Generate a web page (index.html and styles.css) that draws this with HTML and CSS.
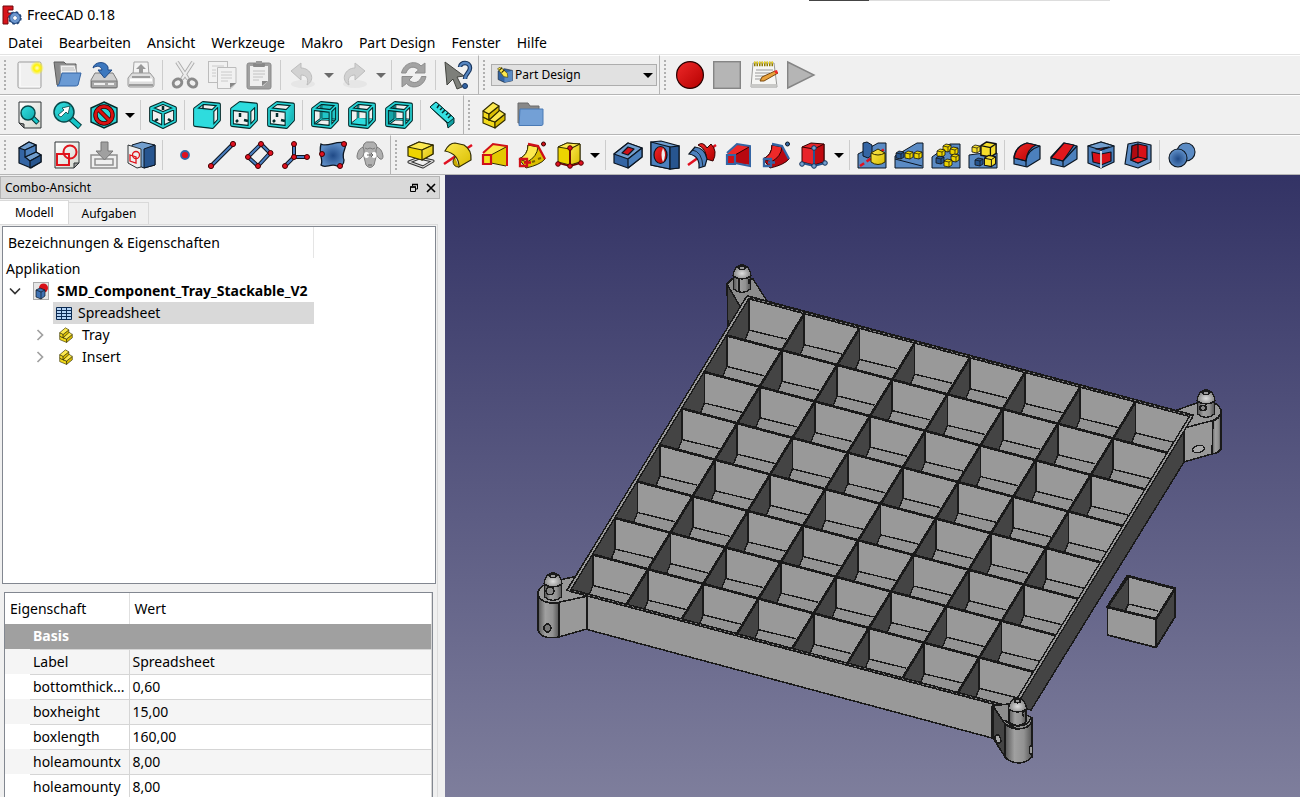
FILE: index.html
```html
<!DOCTYPE html>
<html lang="de">
<head>
<meta charset="utf-8">
<title>FreeCAD 0.18</title>
<meta name="viewport" content="width=device-width, initial-scale=1">
<link rel="stylesheet" href="styles.css">
</head>
<body>
<svg class="defs" width="0" height="0" aria-hidden="true">
  <defs>
    <linearGradient id="gBlue" x1="0" y1="0" x2="1" y2="1"><stop offset="0" stop-color="#729fcf"/><stop offset="1" stop-color="#27558f"/></linearGradient>
    <linearGradient id="gYellow" x1="0" y1="0" x2="1" y2="1"><stop offset="0" stop-color="#fce94f"/><stop offset="1" stop-color="#d9bd00"/></linearGradient>
    <linearGradient id="gRed" x1="0" y1="0" x2="1" y2="1"><stop offset="0" stop-color="#ef2929"/><stop offset="1" stop-color="#b40000"/></linearGradient>
    <linearGradient id="gTeal" x1="0" y1="0" x2="1" y2="1"><stop offset="0" stop-color="#34e0e2"/><stop offset="1" stop-color="#0fa9ab"/></linearGradient>
    <linearGradient id="gPaper" x1="0" y1="0" x2="1" y2="1"><stop offset="0" stop-color="#ffffff"/><stop offset="1" stop-color="#d3d7cf"/></linearGradient>
    <radialGradient id="gSun"><stop offset="0" stop-color="#fffbd0"/><stop offset=".45" stop-color="#fff200"/><stop offset="1" stop-color="#fff200" stop-opacity="0"/></radialGradient>
    <radialGradient id="gBall" cx=".5" cy=".55"><stop offset="0" stop-color="#204a87"/><stop offset="1" stop-color="#5b8bc4"/></radialGradient>
    <symbol id="wireFront" viewBox="0 0 28 28">
      <g fill="none" stroke="#032b2b" stroke-width="3.8" stroke-linejoin="round"><path d="M2 8L10 2 26 3.500V19L19.500 26 2 24ZM2 8L19.500 10 26 3.500M19.500 10V26"/></g>
      <g fill="none" stroke="#27d5d7" stroke-width="1.700" stroke-linejoin="round"><path d="M2 8L10 2 26 3.500V19L19.500 26 2 24ZM2 8L19.500 10 26 3.500M19.500 10V26"/></g>
    </symbol>
    <symbol id="wireBack" viewBox="0 0 28 28">
      <path d="M10 2V18L2 24M10 18L26 19" fill="none" stroke="#032b2b" stroke-width="2.600"/>
      <path d="M10 2V18L2 24M10 18L26 19" fill="none" stroke="#27d5d7" stroke-width="1"/>
    </symbol>
    <symbol id="part" viewBox="0 0 28 28">
      <g stroke="#302b00" stroke-width="1.100" stroke-linejoin="round"><path d="M3 16L9 19 15 21V27L3 22Z" fill="#f3da1c"/><path d="M15 21L25 13V19L15 27Z" fill="#d9bd00"/><path d="M9 19L19 9 25 13 15 21Z" fill="#fce94f"/><path d="M3 10L9 13V19L3 16Z" fill="#f3da1c"/><path d="M9 13L19 5V10L9 19Z" fill="#d9bd00"/><path d="M3 10L13 1.500 19 5 9 13Z" fill="#fce94f"/></g>
    </symbol>
    <symbol id="miniCube" viewBox="0 0 10 10">
      <path d="M1 3L4 1 9 2V7L6 9 1 8Z" stroke-width=".8" stroke-linejoin="round"/><path d="M1 3L6 4 9 2M6 4V9" fill="none" stroke-width=".7"/>
    </symbol>
    <linearGradient id="gSky" x1="0" y1="0" x2="0" y2="1"><stop offset="0" stop-color="#333365"/><stop offset="1" stop-color="#7e7e9c"/></linearGradient>
    <linearGradient id="gCyl"><stop offset="0" stop-color="#555"/><stop offset=".35" stop-color="#a0a0a0"/><stop offset=".7" stop-color="#929292"/><stop offset="1" stop-color="#555"/></linearGradient>
    <radialGradient id="gDome" cx=".5" cy=".6"><stop offset="0" stop-color="#dedede"/><stop offset="1" stop-color="#858585"/></radialGradient>
  </defs>
</svg>

<div class="window">
<header class="titlebar">
  <svg class="app-icon" viewBox="0 0 20 20" aria-hidden="true"><path d="M1 1H11V5H6V8H10V12H6V19H1Z" fill="#d8141c" stroke="#70080c"/><circle cx="13" cy="13" r="4" fill="none" stroke="#22477c" stroke-width="4"/><circle cx="13" cy="13" r="5.600" fill="none" stroke="#22477c" stroke-width="2.200" stroke-dasharray="2.400 2"/><circle cx="13" cy="13" r="3.600" fill="none" stroke="#6c97cf" stroke-width="2.600"/></svg>
  <h1>FreeCAD 0.18</h1>
  <span class="edge" aria-hidden="true"></span>
</header>
<nav class="menubar" aria-label="Menü">
  <button>Datei</button><button>Bearbeiten</button><button>Ansicht</button><button>Werkzeuge</button><button>Makro</button><button>Part Design</button><button>Fenster</button><button>Hilfe</button>
</nav>

<div class="toolrow">
  <div class="toolbar" role="toolbar" aria-label="Datei"><span class="grip"></span>
    <button class="tool" aria-label="Neu"><svg viewBox="0 0 28 28"><rect x="2" y="1" width="23" height="26" rx="1.500" fill="#f0f0f0" stroke="#9b9b9b"/><path d="M4 3V25M3.500 26H24" stroke="#fff" fill="none"/><circle cx="21" cy="7" r="7" fill="url(#gSun)"/></svg></button>
    <button class="tool" aria-label="Öffnen"><svg viewBox="0 0 28 28"><path d="M1 1H11L13 3H23V24H4Z" fill="#8a8a8a" stroke="#5d5d5d"/><path d="M7 4H22L25 16 8 24Z" fill="#f0f0f0" stroke="#999"/><path d="M9 7H21M9 9H22" stroke="#bbb"/><path d="M9 12H28L25 24Q24 25 22 25H4Q6 24 6.500 22Z" fill="#6a9ad4" stroke="#3465a4"/></svg></button>
    <button class="tool" aria-label="Speichern"><svg viewBox="0 0 28 28"><path d="M5 12H23L27 19V26Q27 27 26 27H2Q1 27 1 26V19Z" fill="#cfcfcf" stroke="#7d7d7d"/><path d="M1.500 20H27V26.500H1.500Z" fill="#a8a8a8" stroke="#7d7d7d"/><path d="M4 23H15M18 23H24" stroke="#eee" stroke-width="2"/><path d="M3 7C4 1 15-1 18 6V9H22L14.500 17 8 9H12C11 5 7 4 3 7Z" fill="#3c78bf" stroke="#204a87"/></svg></button>
    <button class="tool" aria-label="Drucken"><svg viewBox="0 0 28 28"><path d="M7 1H21L22 14H6Z" fill="#f4f4f4" stroke="#a5a5a5"/><path d="M14 3L19 8H16V13H12V8H9Z" fill="#999"/><path d="M5 12H23L27 17V24Q27 26 25 26H3Q1 26 1 24V17Z" fill="#dedede" stroke="#9a9a9a"/><path d="M5 16H23M2 24H26" stroke="#888" stroke-width="1.500"/><path d="M3 19H25" stroke="#fff" stroke-width="3"/></svg></button>
    <span class="sep"></span>
    <button class="tool" aria-label="Ausschneiden"><svg viewBox="0 0 28 28"><path d="M6 1L17 18M22 1L11 18" stroke="#ababab" stroke-width="4"/><path d="M6 1L17 18M22 1L11 18" stroke="#ececec" stroke-width="2.200"/><ellipse cx="6.500" cy="22" rx="4.500" ry="3.800" transform="rotate(-35 6.500 22)" fill="none" stroke="#8a8a8a" stroke-width="3"/><ellipse cx="21.500" cy="22" rx="4.500" ry="3.800" transform="rotate(35 21.500 22)" fill="none" stroke="#8a8a8a" stroke-width="3"/></svg></button>
    <button class="tool" aria-label="Kopieren"><svg viewBox="0 0 28 28"><g fill="#f1f1f1" stroke="#bcbcbc"><rect x=".5" y=".5" width="19" height="21"/><path d="M9.500 6.500H28V22L23 27.500H9.500Z"/></g><path d="M4 5H16M4 9H8M4 12H8M4 15H8M13 11H24M13 14H24M13 17H24M13 20H20" stroke="#cacaca"/><path d="M22 27V22H28Z" fill="#888"/></svg></button>
    <button class="tool" aria-label="Einfügen"><svg viewBox="0 0 28 28"><rect x="2" y="2" width="24" height="26" rx="2" fill="#a0a0a0" stroke="#8a8a8a"/><path d="M5 5H23V20L18 25H5Z" fill="#efefef"/><path d="M17 25V20H23Z" fill="#888"/><rect x="8" y="2" width="12" height="4" rx="1" fill="#888"/><rect x="11" y="0" width="6" height="3" fill="#999"/><path d="M8 10H20M8 13H20M8 16H18M8 19H14" stroke="#c2c2c2"/></svg></button>
    <span class="sep"></span>
    <button class="tool" aria-label="Rückgängig"><svg viewBox="0 0 28 28"><ellipse cx="14" cy="23" rx="12" ry="4" fill="#e6e6e6"/><path d="M2 10L12 2V7C22 7 27 19 18 24 20 17 17 14 12 14V19Z" fill="#d2d2d2" stroke="#bdbdbd"/></svg></button>
    <button class="drop" aria-label="Rückgängig-Liste"><i class="arrow grey"></i></button>
    <button class="tool" aria-label="Wiederherstellen"><svg viewBox="0 0 28 28"><ellipse cx="14" cy="23" rx="12" ry="4" fill="#e6e6e6"/><path d="M24 10L14 2V7C4 7-1 19 8 24 6 17 9 14 14 14V19Z" fill="#d2d2d2" stroke="#bdbdbd"/></svg></button>
    <button class="drop" aria-label="Wiederherstellen-Liste"><i class="arrow grey"></i></button>
    <span class="sep"></span>
    <button class="tool" aria-label="Aktualisieren"><svg viewBox="0 0 28 28" fill="#a3a3a3" stroke="#8c8c8c"><path d="M1.500 12C4 1 16-1 21 5L25 2V12H15L18.500 9C14 4 8 6 6 12Z"/><path d="M26 15.500C24 26 12 29 6.500 22.500L2 26V15.500H12.500L9 19C14 24 20 21 21.500 15.500Z"/></svg></button>
    <span class="sep"></span>
    <button class="tool" aria-label="Direkthilfe"><svg viewBox="0 0 28 28"><path d="M1 1L20 15 13 16 18 26 13 28 9 18 3 24Z" fill="#7d7f7a" stroke="#42443f"/><path d="M16 6C16 1 26 0 26 7 26 12 21 12 21 18" fill="none" stroke="#16335b" stroke-width="4.500"/><path d="M16 6C16 1 26 0 26 7 26 12 21 12 21 18" fill="none" stroke="#5585c0" stroke-width="2.300"/><circle cx="21" cy="25" r="2.500" fill="#3465a4" stroke="#16335b"/></svg></button>
  </div>
  <div class="toolbar" role="toolbar" aria-label="Arbeitsbereich"><span class="grip"></span>
    <div class="workbench"><svg viewBox="0 0 28 28" aria-hidden="true"><path d="M2 7L13 3 27 6V24L13 27 2 22Z" fill="#3465a4" stroke="#0b1521"/><path d="M13 11L27 6V24L13 27Z" fill="#5b8bc4"/><path d="M1 3L6 0 18 11 19 18 12 17Z" fill="#fce94f" stroke="#302b00"/><path d="M4 6L9 1M8 10L13 5" stroke="#302b00" stroke-width="2"/></svg><select aria-label="Arbeitsbereich"><option>Part Design</option></select><i class="arrow"></i></div>
  </div>
  <div class="toolbar last" role="toolbar" aria-label="Makro"><span class="grip"></span>
    <button class="tool" aria-label="Makro aufzeichnen"><svg viewBox="0 0 28 28"><circle cx="14" cy="14" r="13.400" fill="url(#gRed)" stroke="#280000" stroke-width="1.200"/></svg></button>
    <button class="tool" aria-label="Makro stoppen"><svg viewBox="0 0 28 28"><rect x=".7" y=".7" width="26.600" height="26.600" fill="#b5b5b5" stroke="#858585" stroke-width="1.400"/></svg></button>
    <button class="tool" aria-label="Makros"><svg viewBox="0 0 28 28"><path d="M3 2H24L27 26H1Z" fill="#f6f6f4" stroke="#9a9a98"/><path d="M1.500 23H26.500V26.500H1Z" fill="#c9c9c7"/><path d="M4 3H24" stroke="#8f7a00" stroke-width="4.500" stroke-dasharray="1.500 1"/><path d="M4 1.500H24" stroke="#f0d820" stroke-width="2" stroke-dasharray="1.500 1"/><path d="M6 9H23M5 12H20M5 15H16M5 18H12" stroke="#999"/><path d="M10 20L12 16 25 10 28 12 14 20Z" fill="#e9a13b" stroke="#7a4a10"/><path d="M24 10L27 9 28 12 26 13Z" fill="#ef2929"/></svg></button>
    <button class="tool" aria-label="Makro ausführen"><svg viewBox="0 0 28 28"><path d="M.7 1L27 14 .7 27Z" fill="#b5b5b5" stroke="#858585" stroke-width="1.400"/></svg></button>
  </div>
</div>

<div class="toolrow">
  <div class="toolbar" role="toolbar" aria-label="Ansicht"><span class="grip"></span>
    <button class="tool" aria-label="Alles einpassen"><svg viewBox="0 0 28 28"><path d="M3 1H25V27H8L3 22Z" fill="url(#gPaper)" stroke="#2e3436"/><path d="M3 22L8 23V27Z" fill="#888" stroke="#2e3436"/><path d="M16 16L22 22" stroke="#033" stroke-width="5"/><path d="M16 16L21.500 21.500" stroke="#16c5c8" stroke-width="3"/><circle cx="12" cy="12" r="7" fill="url(#gTeal)" stroke="#06494a" stroke-width="1.500"/></svg></button>
    <button class="tool" aria-label="Auswahl einpassen"><svg viewBox="0 0 28 28"><path d="M17 17L27 26" stroke="#033" stroke-width="6"/><path d="M17 17L26.500 25.500" stroke="#16c5c8" stroke-width="4"/><circle cx="11" cy="11" r="10" fill="url(#gTeal)" stroke="#06494a" stroke-width="1.500"/><path d="M5 14L11 9 9 7 17 5 15 13 13 11 8 16Z" fill="#fff" stroke="#044" stroke-width=".8"/></svg></button>
    <button class="tool" aria-label="Zeichenstil"><svg viewBox="0 0 28 28"><path d="M14 1L27 7V21L14 27 1 21V7Z" fill="#2bd4d6" stroke="#032b2b" stroke-width="1.400"/><circle cx="14" cy="14" r="8.500" fill="none" stroke="#280000" stroke-width="4.500"/><path d="M8 8L20 20" stroke="#280000" stroke-width="4.500"/><circle cx="14" cy="14" r="8.500" fill="none" stroke="#d91111" stroke-width="3"/><path d="M8 8L20 20" stroke="#d91111" stroke-width="3"/></svg></button>
    <button class="drop" aria-label="Zeichenstil-Liste"><i class="arrow"></i></button>
    <span class="sep"></span>
    <button class="tool" aria-label="Axonometrisch"><svg viewBox="0 0 28 28" fill="none" stroke-linejoin="round"><path d="M14 2L26 7V20L14 26 2 20V7ZM2 7L14 12 26 7M14 12V26" stroke="#032b2b" stroke-width="3.800"/><path d="M14 2L26 7V20L14 26 2 20V7ZM2 7L14 12 26 7M14 12V26" stroke="#27d5d7" stroke-width="1.600"/><path d="M14 5V9M6 20L9 18M22 20L19 18" stroke="#032b2b" stroke-width="2.500"/></svg></button>
    <span class="sep"></span>
    <button class="tool" aria-label="Vorne"><svg viewBox="0 0 28 28"><path d="M10 4V8" stroke="#032b2b" stroke-width="1.500"/><use href="#wireFront"/><path d="M1.500 8L19.500 10V26.500L1.500 24Z" fill="#2edcde"/></svg></button>
    <button class="tool" aria-label="Oben"><svg viewBox="0 0 28 28"><path d="M10 12V16M6 21L8 19M14 19L18 20" stroke="#032b2b" stroke-width="2.500"/><use href="#wireFront"/><path d="M2 8L10 2 26 3.500 19.500 10Z" fill="#2edcde"/></svg></button>
    <button class="tool" aria-label="Rechts"><svg viewBox="0 0 28 28"><path d="M10 12V16M6 21L8 19M14 19L18 20" stroke="#032b2b" stroke-width="2.500"/><use href="#wireFront"/><path d="M19.500 10L26 3.500V19L19.500 26Z" fill="url(#gTeal)"/></svg></button>
    <span class="sep"></span>
    <button class="tool" aria-label="Hinten"><svg viewBox="0 0 28 28"><path d="M10 2L26 3.500V19L10 18Z" fill="#21c6c8"/><use href="#wireBack"/><use href="#wireFront"/></svg></button>
    <button class="tool" aria-label="Unten"><svg viewBox="0 0 28 28"><use href="#wireBack"/><path d="M10 17L26 18 19.500 26 2 24Z" fill="#2edcde"/><use href="#wireFront"/></svg></button>
    <button class="tool" aria-label="Links"><svg viewBox="0 0 28 28"><path d="M10 2V18L2 24V8.500Z" fill="#15a5a7"/><use href="#wireBack"/><use href="#wireFront"/></svg></button>
    <span class="sep"></span>
    <button class="tool" aria-label="Abstand messen"><svg viewBox="0 0 28 28"><path d="M1 6L7 1 25 17V22L19 27 18 22Z" fill="#10a0a2" stroke="#032b2b"/><path d="M1 6L7 1 25 17 19 22Z" fill="#34e0e2" stroke="#032b2b"/><path d="M10 4L8 7M13 7L11 9M16 9L13 12M19 12L17 14M22 14L19 17" stroke="#032b2b" stroke-width="1.500"/></svg></button>
  </div>
  <div class="toolbar last" role="toolbar" aria-label="Struktur"><span class="grip"></span>
    <button class="tool" aria-label="Part erstellen"><svg viewBox="0 0 28 28"><use href="#part"/></svg></button>
    <button class="tool" aria-label="Gruppe erstellen"><svg viewBox="0 0 28 28"><path d="M1 2H11L13 5H22V22H1Z" fill="#888" stroke="#6a6a6a"/><path d="M3 8H26V23Q26 24.500 24 24.500H2Z" fill="#73a0d6" stroke="#4a7ab5"/></svg></button>
  </div>
</div>

<div class="toolrow">
  <div class="toolbar" role="toolbar" aria-label="Part Design Helfer"><span class="grip"></span>
    <button class="tool" aria-label="Körper erstellen"><svg viewBox="0 0 28 28" stroke="#0b1521" stroke-width="1.200" stroke-linejoin="round"><path d="M3 7L13 1 20 4V11L25 14V21L15 27 3 22Z" fill="#3465a4"/><path d="M3 7L13 1 20 4 9 9ZM9 16L20 11 25 14 14 20Z" fill="#729fcf"/><path d="M9 9L20 4V11L9 16Z" fill="#4c80bd"/><path d="M14 20L25 14V21L14 27Z" fill="#27558f"/></svg></button>
    <button class="tool" aria-label="Skizze erstellen"><svg viewBox="0 0 28 28"><path d="M2 1H26V22L21 27H2Z" fill="url(#gPaper)" stroke="#2e3436"/><path d="M21 27V22H26Z" fill="#999" stroke="#2e3436"/><g fill="none" stroke="#e0141c" stroke-width="2"><rect x="4" y="13" width="12" height="11"/><circle cx="17" cy="11" r="6.500"/></g></svg></button>
    <button class="tool" aria-label="Skizze abbilden"><svg viewBox="0 0 28 28"><path d="M1 14H27V27H1Z" fill="#efefef" stroke="#909090" stroke-width="1.500"/><path d="M5 24V18H23V24Z" fill="none" stroke="#909090" stroke-width="1.500"/><path d="M11 1H18V10H23L14.500 19 6 10H11Z" fill="#a0a0a0" stroke="#777"/></svg></button>
    <button class="tool" aria-label="Skizze zuordnen"><svg viewBox="0 0 28 28"><path d="M5 4L15 1 28 4V24L17 27 5 22Z" fill="#729fcf" stroke="#0b1521"/><path d="M17 8L28 4V24L17 27Z" fill="#27558f" stroke="#0b1521"/><path d="M1 4L14 8V26L10 27 1 22Z" fill="#eee" stroke="#2e3436"/><g fill="none" stroke="#e0141c" stroke-width="1.300"><path d="M3 14L9 16V22L3 20Z"/><circle cx="9" cy="14" r="3.500"/></g></svg></button>
    <span class="sep"></span>
    <button class="tool" aria-label="Punkt"><svg viewBox="0 0 28 28"><circle cx="14" cy="14" r="4" fill="#e01020" stroke="#3465a4" stroke-width="1.800"/></svg></button>
    <button class="tool" aria-label="Linie"><svg viewBox="0 0 28 28"><path d="M3 25L25 3" stroke="#0b1521" stroke-width="4"/><path d="M3 25L25 3" stroke="#4a7ebf" stroke-width="2"/><g fill="#e01020" stroke="#400"><circle cx="3" cy="25" r="2.600"/><circle cx="25" cy="3" r="2.600"/></g></svg></button>
    <button class="tool" aria-label="Ebene"><svg viewBox="0 0 28 28"><path d="M16 3L25 12 13 25 3 16Z" fill="none" stroke="#0b1521" stroke-width="4"/><path d="M16 3L25 12 13 25 3 16Z" fill="none" stroke="#4a7ebf" stroke-width="2"/><g fill="#e01020" stroke="#400"><circle cx="16" cy="3" r="2.500"/><circle cx="25.500" cy="12" r="2.500"/><circle cx="13" cy="25" r="2.500"/><circle cx="3" cy="16" r="2.500"/></g></svg></button>
    <button class="tool" aria-label="Lokales Koordinatensystem"><svg viewBox="0 0 28 28"><path d="M12 3V16L3 25M12 16H25" fill="none" stroke="#0b1521" stroke-width="4"/><path d="M12 3V16L3 25M12 16H25" fill="none" stroke="#4a7ebf" stroke-width="2"/><g fill="#e01020" stroke="#400"><circle cx="12" cy="3" r="2.500"/><circle cx="25" cy="16" r="2.500"/><circle cx="12" cy="16" r="2.500"/><circle cx="3" cy="25" r="2.500"/></g></svg></button>
    <button class="tool" aria-label="Formbinder"><svg viewBox="0 0 28 28"><path d="M2 3C8 7 17-1 27 2 27 9 22 12 25 19 25 24 22 26 18 25 12 22 6 28 2 24 5 19-1 14 2 3Z" fill="url(#gBall)" stroke="#0b1521" stroke-width="1.300"/><g fill="#e01020" stroke="#400"><circle cx="25" cy="3" r="2.500"/><circle cx="3" cy="13" r="2.500"/><circle cx="21" cy="25" r="2.500"/></g></svg></button>
    <button class="tool" aria-label="Klonen"><svg viewBox="0 0 28 28" fill="#b0b0b0" stroke="#7c7c7c"><path d="M8 6Q2 7 1 15 1 19 4 18 7 16 9 11ZM20 6Q26 7 27 15 27 19 24 18 21 16 19 11Z"/><path d="M8 3Q10 0 14 1 18 0 20 3 22 6 20 9L20 16 18 24Q14 29 10 24L8 16 8 9Q6 6 8 3Z"/><path d="M9 7Q11 9 14 7 17 9 19 7" fill="none"/><g stroke="none" fill="#fff"><ellipse cx="10.500" cy="14" rx="2.500" ry="3"/><ellipse cx="18" cy="14" rx="2.500" ry="3"/></g><path d="M11 14H17M15 12L17 14 15 16M12 24H16" fill="none" stroke="#666"/></svg></button>
  </div>
  <div class="toolbar last" role="toolbar" aria-label="Part Design Modellierung"><span class="grip"></span>
    <button class="tool" aria-label="Aufpolsterung"><svg viewBox="0 0 28 28" stroke-linejoin="round"><path d="M2 21L12 17 26 20 16 26Z" fill="none" stroke="#333" stroke-width="3.200"/><path d="M2 21L12 17 26 20 16 26Z" fill="none" stroke="#ddd" stroke-width="1.200"/><g stroke="#302b00" stroke-width="1.200"><path d="M1 6L12 1 26 4V13L15 19 1 15Z" fill="#edd400"/><path d="M1 6L12 1 26 4 15 9Z" fill="#fce94f"/><path d="M15 9L26 4V13L15 19Z" fill="url(#gYellow)"/></g></svg></button>
    <button class="tool" aria-label="Drehteil"><svg viewBox="0 0 28 28"><path d="M0 23L28 4" stroke="#e01020" stroke-width="2.500"/><path d="M1 10Q5 2 11 2L20 4Q28 9 27 19L15 26Q15 13 1 10Z" fill="url(#gYellow)" stroke="#302b00" stroke-width="1.200"/><path d="M15 26Q9 26 9 20L11 16" fill="#c9aa00" stroke="#302b00"/></svg></button>
    <button class="tool" aria-label="Ausformung"><svg viewBox="0 0 28 28"><path d="M2 14L12 4 26 5V25L10 22Z" fill="#e3c800"/><path d="M2 13L12 4 25 6 10 14Z" fill="#fce94f"/><path d="M10 14L25 6M10 22L25 25" fill="none" stroke="#302b00"/><path d="M2 12L12 3 26 5V25" fill="none" stroke="#d01018" stroke-width="2"/><path d="M2 14H10V23H2Z" fill="#f5e020" stroke="#d01018" stroke-width="2.200"/></svg></button>
    <button class="tool" aria-label="Rohr"><svg viewBox="0 0 28 28"><path d="M1 18Q10 14 10 4L20 6 27 18Q22 24 8 27Z" fill="#dcbf00" stroke="#302b00"/><path d="M1 18Q10 14 10 4L20 6Q19 16 9 21Z" fill="#fce94f" stroke="#302b00"/><path d="M10 3L20 5 27 18" fill="none" stroke="#d01018" stroke-width="2.300"/><path d="M2 18H9V25H2ZM6 21.500H13" fill="none" stroke="#d01018" stroke-width="2.300"/><circle cx="25.500" cy="3" r="2" fill="#d01018" stroke="#300"/><path d="M14 21L17 20M20 18L23 17" stroke="#7a6500" stroke-width="2"/></svg></button>
    <button class="tool" aria-label="Grundkörper hinzufügen"><svg viewBox="0 0 28 28"><path d="M3 6L12 2 25 3V21L15 24 3 21Z" fill="#edd400" stroke="#302b00"/><path d="M3 6L12 2 25 3 15 8Z" fill="#fce94f" stroke="#302b00"/><path d="M15 8L25 3V21L15 24Z" fill="url(#gYellow)" stroke="#302b00"/><path d="M3 22L15 25 26 22M15 25V7" fill="none" stroke="#600" stroke-width="1.800"/><g fill="#e01020" stroke="#500"><circle cx="3" cy="23" r="2.300"/><circle cx="15" cy="25" r="2.300"/><circle cx="26" cy="22" r="2.300"/><circle cx="15" cy="7" r="2.300"/></g></svg></button>
    <button class="drop" aria-label="Grundkörper-Liste"><i class="arrow"></i></button>
    <span class="sep"></span>
    <button class="tool" aria-label="Tasche"><svg viewBox="0 0 28 28" stroke="#0b1521" stroke-linejoin="round" stroke-width="1.200"><path d="M0 13L14 2 28 7V16L14 27 0 22Z" fill="#3465a4"/><path d="M0 13L14 2 28 7 14 18Z" fill="#729fcf"/><path d="M14 18L28 7V16L14 27Z" fill="#4c80bd"/><path d="M8 12L14 6 20 8 14 14Z" fill="#d01018"/></svg></button>
    <button class="tool" aria-label="Bohrung"><svg viewBox="0 0 28 28" stroke="#0b1521" stroke-width="1.200"><path d="M0 1L10 0 28 5V27L19 28 0 24Z" fill="#729fcf"/><path d="M0 1L19 6V28L0 24Z" fill="#4c80bd"/><path d="M19 6L28 5V27L19 28Z" fill="#27558f"/><ellipse cx="9.500" cy="14" rx="6.500" ry="8.500" fill="url(#gRed)"/><path d="M12 7Q16 14 12 21Q9 14 12 7Z" fill="#eee" stroke="none"/></svg></button>
    <button class="tool" aria-label="Nut"><svg viewBox="0 0 28 28"><path d="M0 24L28 4" stroke="#e01020" stroke-width="2.500"/><path d="M10 4Q15 0 19 7L23 3Q30 10 25 20L18 18Q19 8 10 4Z" fill="url(#gRed)" stroke="#300"/><path d="M1 13L7 6Q17 7 19 18L17 25 11 27Q12 15 1 13Z" fill="#4c80bd" stroke="#0b1521" stroke-width="1.200"/><path d="M4 9Q14 10 15 26" fill="none" stroke="#0b1521" stroke-width=".8"/></svg></button>
    <button class="tool" aria-label="Abzugsausformung"><svg viewBox="0 0 28 28"><path d="M2 14L12 4 25 5V24L10 22Z" fill="#b80810"/><path d="M2 13L12 4 24 6 10 14Z" fill="#ef2929"/><path d="M10 14L24 6" fill="none" stroke="#300"/><path d="M2 12L12 3 25 5V25L10 22" fill="none" stroke="#3465a4" stroke-width="2"/><path d="M2 14H10V23H2Z" fill="#d01018" stroke="#3465a4" stroke-width="2.200"/></svg></button>
    <button class="tool" aria-label="Abzugsrohr"><svg viewBox="0 0 28 28"><path d="M1 18Q10 14 10 4L20 6 27 18Q22 24 8 27Z" fill="#b80810" stroke="#300"/><path d="M1 18Q10 14 10 4L20 6Q19 16 9 21Z" fill="#ef2929" stroke="#300"/><path d="M10 3L20 5 27 18" fill="none" stroke="#3465a4" stroke-width="2.300"/><path d="M2 18H9V25H2ZM6 21.500H13" fill="none" stroke="#3465a4" stroke-width="2.300"/><circle cx="25.500" cy="3" r="2" fill="#3465a4" stroke="#0b1521"/></svg></button>
    <button class="tool" aria-label="Grundkörper abziehen"><svg viewBox="0 0 28 28"><path d="M3 6L12 2 25 3V21L15 24 3 21Z" fill="#e8242a" stroke="#300"/><path d="M15 8L25 3V21L15 24Z" fill="#c00a10" stroke="#300"/><path d="M3 6L15 8" stroke="#300"/><path d="M3 22L15 25 26 22M15 25V7" fill="none" stroke="#27558f" stroke-width="2"/><g fill="#729fcf" stroke="#16335b"><circle cx="3" cy="23" r="2.300"/><circle cx="15" cy="25" r="2.300"/><circle cx="26" cy="22" r="2.300"/><circle cx="15" cy="7" r="2.300"/></g></svg></button>
    <button class="drop" aria-label="Abzugskörper-Liste"><i class="arrow"></i></button>
    <span class="sep"></span>
    <button class="tool" aria-label="Spiegeln"><svg viewBox="0 0 28 28"><path d="M0 13L6 10 20 2H28V27H0Z" fill="#5b8bc4" stroke="#0b1521"/><path d="M5 2L9 1 14 4V14L10 17 5 15Z" fill="#3465a4" stroke="#0b1521"/><path d="M2 25L28 7" stroke="#e01020" stroke-width="2.500" stroke-dasharray="5 3"/><path d="M13 12L20 8 27 12V21Q20 26 13 21Z" fill="url(#gYellow)" stroke="#302b00"/><path d="M13 12Q20 16 27 12" fill="none" stroke="#302b00"/></svg></button>
    <button class="tool" aria-label="Lineares Muster"><svg viewBox="0 0 28 28"><path d="M0 15L22 2H28V27H0Z" fill="#5b8bc4" stroke="#0b1521"/><path d="M0 18L27 25" stroke="#0b1521"/><g stroke="#111"><use href="#miniCube" x="0" y="9" width="10" height="10" fill="#27558f"/><use href="#miniCube" x="9" y="9" width="10" height="10" fill="#edd400"/><use href="#miniCube" x="18" y="9" width="10" height="10" fill="#edd400"/></g></svg></button>
    <button class="tool" aria-label="Polares Muster"><svg viewBox="0 0 28 28"><path d="M0 16L18 3H28V27H0Z" fill="#5b8bc4" stroke="#0b1521"/><g stroke="#111" fill="#edd400"><use href="#miniCube" x="10" y="2" width="10" height="10"/><use href="#miniCube" x="4" y="7" width="10" height="10"/><use href="#miniCube" x="17" y="5" width="10" height="10"/><use href="#miniCube" x="18" y="12" width="10" height="10"/><use href="#miniCube" x="11" y="17" width="10" height="10"/><use href="#miniCube" x="3" y="14" width="10" height="10" fill="#27558f"/></g></svg></button>
    <button class="tool" aria-label="Mehrfachtransformation"><svg viewBox="0 0 28 28"><path d="M0 14L15 12H28V27H0Z" fill="#5b8bc4" stroke="#0b1521"/><g stroke="#111" fill="#f6de2a"><use href="#miniCube" x="10" y="-1" width="19" height="19"/><use href="#miniCube" x="2" y="3" width="10" height="10"/><use href="#miniCube" x="14" y="13" width="14" height="14"/><use href="#miniCube" x="5" y="16" width="10" height="10" fill="#27558f"/></g></svg></button>
    <span class="sep"></span>
    <button class="tool" aria-label="Verrundung"><svg viewBox="0 0 28 28" stroke="#0b1521" stroke-width="1.200" stroke-linejoin="round"><path d="M1 15Q3 5 14 2L27 5V18L14 26 1 23Z" fill="#4c80bd"/><path d="M1 17Q3 5 14 2L23 4Q14 8 13 20Z" fill="url(#gRed)"/><path d="M1 17L13 20V26M13 20Q14 9 27 5" fill="none"/></svg></button>
    <button class="tool" aria-label="Fase"><svg viewBox="0 0 28 28" stroke="#0b1521" stroke-width="1.200" stroke-linejoin="round"><path d="M1 16L14 2 27 5V18L14 26 1 23Z" fill="#4c80bd"/><path d="M1 17L14 2 24 4 13 20Z" fill="#e0181c"/><path d="M1 17L13 20V26M13 20L27 5" fill="none"/></svg></button>
    <button class="tool" aria-label="Schräge"><svg viewBox="0 0 28 28" stroke="#0b1521" stroke-width="1.200" stroke-linejoin="round"><path d="M1 5L14 1 27 5V21L14 27 1 22Z" fill="#4c80bd"/><path d="M5 11L14 13V23L6 21ZM14 13L24 11V20L14 24Z" fill="#d91118"/><path d="M1 5L14 9 27 5 14 1Z" fill="#729fcf"/><path d="M9 8L22 6 14 9Z" fill="#d91118"/><path d="M14 10V27" stroke="#fff" stroke-width="1.500"/></svg></button>
    <button class="tool" aria-label="Wandstärke"><svg viewBox="0 0 28 28" stroke="#0b1521" stroke-width="1.200" stroke-linejoin="round"><path d="M4 3L14 1 27 4V21L14 27 1 23Z" fill="#5b8bc4"/><path d="M8 5L14 3 23 5V18L14 22 7 19Z" fill="#d91118"/><path d="M8 5L14 3V16L7 19Z" fill="#b00a10"/><path d="M14 16L23 18 14 22 7 19Z" fill="#ef2929"/></svg></button>
    <span class="sep"></span>
    <button class="tool" aria-label="Boolesche Verknüpfung"><svg viewBox="0 0 28 28" stroke="#0b1521" stroke-width="1.100"><circle cx="18" cy="11" r="9" fill="#5b8bc4"/><circle cx="10" cy="17" r="9" fill="url(#gBall)"/></svg></button>
  </div>
</div>

<main class="workspace">
  <aside class="dock" aria-label="Combo-Ansicht">
    <div class="dock-title"><h2>Combo-Ansicht</h2>
      <button aria-label="Abdocken"><svg viewBox="0 0 10 10"><path d="M3.500 3V1.500H8.500V6H7M1.500 4H6.500V8.500H1.500Z" fill="none" stroke="#000"/><path d="M3 1.500H9M1 4H7" stroke="#000" stroke-width="1.500"/></svg></button>
      <button aria-label="Schließen"><svg viewBox="0 0 10 10"><path d="M1 1L9 9M9 1L1 9" stroke="#000" stroke-width="1.600"/></svg></button></div>
    <div class="tabs" role="tablist"><button role="tab" aria-selected="true" class="active">Modell</button><button role="tab" aria-selected="false">Aufgaben</button></div>
    <div class="pane">
      <section class="tree">
        <h3>Bezeichnungen &amp; Eigenschaften</h3>
        <ul>
          <li class="root">Applikation</li>
          <li class="doc"><button class="twist" aria-label="Zuklappen"><svg viewBox="0 0 12 12"><path d="M1 3.500L6 8.500 11 3.500" fill="none" stroke="#333" stroke-width="1.700"/></svg></button><svg class="node" viewBox="0 0 16 18"><rect x=".5" y=".5" width="15" height="17" fill="#e6e6e6" stroke="#aaa"/><circle cx="10.500" cy="6" r="4.500" fill="#d91118"/><path d="M3 8L7 6 12 8V14L8 17 3 15Z" fill="#3f72b3" stroke="#0b1521" stroke-width=".7"/><path d="M3 8L8 10 12 8M8 10V17" fill="none" stroke="#0b1521" stroke-width=".7"/></svg><span>SMD_Component_Tray_Stackable_V2</span></li>
          <li class="sheet"><svg class="node" viewBox="0 0 16 18"><path d="M.5 3.500H15.500V15.500H.5Z" fill="#b5d4f5" stroke="#0b2a52"/><path d="M.5 6.500H15.500M.5 9.500H15.500M.5 12.500H15.500M5.500 3V16M10.500 3V16" stroke="#0b2a52"/></svg><span>Spreadsheet</span></li>
          <li class="body"><button class="twist" aria-label="Tray aufklappen"><svg viewBox="0 0 12 12"><path d="M3.500 1L8.500 6 3.500 11" fill="none" stroke="#a0a0a0" stroke-width="1.700"/></svg></button><svg class="node" viewBox="0 0 28 28"><use href="#part"/></svg><span>Tray</span></li>
          <li class="body"><button class="twist" aria-label="Insert aufklappen"><svg viewBox="0 0 12 12"><path d="M3.500 1L8.500 6 3.500 11" fill="none" stroke="#a0a0a0" stroke-width="1.700"/></svg></button><svg class="node" viewBox="0 0 28 28"><use href="#part"/></svg><span>Insert</span></li>
        </ul>
      </section>
      <section class="props">
        <table>
          <colgroup><col class="indent"><col class="name"><col></colgroup>
          <thead><tr><th colspan="2">Eigenschaft</th><th>Wert</th></tr></thead>
          <tbody>
            <tr class="group"><td></td><th colspan="2">Basis</th></tr>
            <tr><td></td><th>Label</th><td>Spreadsheet</td></tr>
            <tr><td></td><th>bottomthick...</th><td>0,60</td></tr>
            <tr><td></td><th>boxheight</th><td>15,00</td></tr>
            <tr><td></td><th>boxlength</th><td>160,00</td></tr>
            <tr><td></td><th>holeamountx</th><td>8,00</td></tr>
            <tr><td></td><th>holeamounty</th><td>8,00</td></tr>
          </tbody>
        </table>
      </section>
    </div>
  </aside>

  <div class="view">
    <svg viewBox="445 175 855 622" preserveAspectRatio="xMidYMid slice" role="img" aria-label="3D-Ansicht">
      <defs>
        <g id="cell">
          <path d="M0 0L55.200 14.700 32.900 51.200-22.300 36.500Z" fill="#999"/>
          <path d="M0 31L38 40 33 51-3 41Z" fill="#939393"/>
          <path d="M0 0V31L-4 40.500-22.300 36.500Z" fill="#444"/>
          <path d="M-4 41L0 31 37.500 40.200" fill="none" stroke="#1a1a1a" stroke-width="1.400"/>
          <path d="M0 0V31" stroke="#1a1a1a" stroke-width="1.800"/>
        </g>
        <g id="row"><use href="#cell"/><use href="#cell" x="55.200" y="14.700"/><use href="#cell" x="110.400" y="29.400"/><use href="#cell" x="165.600" y="44.100"/><use href="#cell" x="220.800" y="58.800"/><use href="#cell" x="276" y="73.500"/><use href="#cell" x="331.200" y="88.200"/><use href="#cell" x="386.400" y="102.900"/></g>
        <g id="pin" stroke="#1a1a1a" stroke-width="1.400">
          <path d="M-8.500-14V-1Q0 6 8.500-1V-14Z" fill="url(#gCyl)"/>
          <path d="M-9-14A9 11 0 0 1 9-14Q0-8-9-14Z" fill="url(#gDome)"/>
          <ellipse cy="-22" rx="3" ry="1.800" fill="#999"/>
        </g>
      </defs>
      <rect x="-2000" y="175" width="5000" height="622" fill="url(#gSky)"/>
      <g class="model">
      <g stroke="#1a1a1a" stroke-width="1.500" stroke-linejoin="round">
        <path d="M727 284L732 279H753L767 301 741 309Z" fill="#8d8d8d"/>
        <path d="M727 284L741 308 728 330Z" fill="#444"/>
        <use href="#pin" x="742" y="290"/>
        <path d="M739 279V292M749 279V284" fill="none"/>
        <path d="M1174 411L1197 403Q1217 399 1221 410V449Q1219 453 1212 454L1184 462V420Z" fill="#999"/>
        <path d="M1213 421Q1219 419 1221 413V448Q1219 453 1212 454Z" fill="url(#gCyl)"/>
        <path d="M1184 428L1211 421Q1221 418 1221 410" fill="none"/>
        <ellipse cx="1198.500" cy="449" rx="6" ry="3.500" transform="rotate(-12 1198.500 449)" fill="#aaa"/>
        <use href="#pin" x="1206" y="415"/>
        <ellipse cx="1203" cy="408" rx="3.500" ry="2.500" fill="#888"/>
        <path d="M538 592Q540 586 550 582L573 577 587 596V629L559 637Q541 640 538 630Z" fill="#999"/>
        <path d="M538 595Q541 604 559 603V637Q541 640 538 630Z" fill="url(#gCyl)"/>
        <path d="M538 595Q543 606 560 602L588 596" fill="none"/>
        <ellipse cx="547.500" cy="628" rx="3.500" ry="4" fill="#777"/>
        <use href="#pin" x="553" y="598"/>
        <ellipse cx="550" cy="591" rx="4" ry="3.500" fill="#888"/>
      </g>
      <g stroke="#1a1a1a" stroke-width="1.500" stroke-linejoin="round">
        <path d="M567 590L1016 709 993 738 587 629.500V596Z" fill="#999" stroke="none"/>
        <path d="M587 596V629.500L992 738V706" fill="none"/>
        <path d="M1192 416L1184 428V462L1031 710 1012 706Z" fill="#444"/>
        <path d="M748 296L1193 415 1013 709 567 590Z" fill="#999"/>
      </g>
      <g>
        <use href="#row" x="749" y="299"/><use href="#row" x="726.700" y="335.500"/><use href="#row" x="704.400" y="372"/><use href="#row" x="682.100" y="408.500"/><use href="#row" x="659.800" y="445"/><use href="#row" x="637.500" y="481.500"/><use href="#row" x="615.200" y="518"/><use href="#row" x="592.900" y="554.500"/>
      </g>
      <g stroke="#1a1a1a" stroke-width="2.600" fill="none">
        <path d="M726.700 335.500L1168.300 453.100M704.400 372L1146 489.600M682.100 408.500L1123.700 526.100M659.800 445L1101.400 562.600M637.500 481.500L1079.100 599.100M615.200 518L1056.800 635.600M592.900 554.500L1034.500 672.100"/>
        <path d="M804.200 313.700L625.800 605.700M859.400 328.400L681 620.400M914.600 343.100L736.200 635.100M969.800 357.800L791.400 649.800M1025 372.500L846.600 664.500M1080.200 387.200L901.800 679.200M1135.400 401.900L957 693.900"/>
      </g>
      <g fill="none" stroke="#1a1a1a">
        <path d="M748 297.500L1192 416M569 590L1012 708" stroke-width="3.600"/>
        <path d="M748 297.500L1192 416M569 590L1012 708" stroke="#808080" stroke-width="1" stroke-dasharray="2 3"/>
        <path d="M748 297L569 590M1191.500 416L1013 708" stroke-width="4.400"/>
        <path d="M748 297L569 590M1191.500 416L1013 708" stroke="#999" stroke-width="1.600"/>
      </g>
      <g stroke="#1a1a1a" stroke-width="1.500" stroke-linejoin="round">
        <path d="M993 706L1008 704 1032 718Q1032 728 1018 729L1005 724Z" fill="#8d8d8d"/>
        <path d="M993 706L1005 724V757L993 738Z" fill="#444"/>
        <path d="M1005 724Q1010 729 1018 729 1029 729 1032 721V757Q1027 763 1018 763 1009 762 1005 757Z" fill="url(#gCyl)"/>
        <path d="M1005 720Q1010 726 1018 726 1029 726 1031 717" fill="none"/>
        <ellipse cx="998" cy="739" rx="2.500" ry="4.500" fill="#aaa" transform="rotate(-20 998 739)"/>
        <ellipse cx="1031" cy="750" rx="1.500" ry="4" fill="#999"/>
        <use href="#pin" x="1017.500" y="723"/>
        <path d="M1024 711Q1021 714 1024 716" fill="none"/>
      </g>
      <g stroke="#1a1a1a" stroke-width="1.800" stroke-linejoin="round">
        <path d="M1127.500 576L1175 588.500 1156 619 1107.500 607Z" fill="#999"/>
        <path d="M1128.500 577V604L1125 611 1107.500 607Z" fill="#444"/>
        <path d="M1128.500 604L1158 611" fill="none" stroke-width="1.400"/>
        <path d="M1107.500 607L1156 619V647.500L1107.500 635Z" fill="#999"/>
        <path d="M1156 619L1175 588.500V617L1156 647.500Z" fill="#444"/>
        <path d="M1127.500 576L1175 588.500 1156 619 1107.500 607Z" fill="none" stroke-width="2.600"/>
      </g>
      </g>
    </svg>
  </div>
</main>
</div>
</body>
</html>
```
FILE: styles.css
```css
* { box-sizing: border-box; }
html, body { height: 100%; margin: 0; }
body { font: 14px/22px "Noto Sans", "Open Sans", sans-serif; color: #000; background: #f0f0f0; }
button, select { font: inherit; color: inherit; background: none; border: 0; padding: 0; margin: 0; }
h1, h2, h3 { font: inherit; margin: 0; }
svg { display: block; }
.defs { position: absolute; }
.window { display: flex; flex-direction: column; height: 100vh; overflow: hidden; }

.titlebar { position: relative; display: flex; align-items: center; gap: 5px; height: 30px; padding-left: 2px; background: #fff; flex: none; }
.app-icon { width: 20px; height: 20px; }
.edge { position: absolute; top: 0; right: 190px; width: 301px; height: 1px; background: linear-gradient(90deg, #444 60px, #ddd 60px); }
.menubar { display: flex; gap: 16px; height: 25px; padding-left: 8px; background: #fff; border-bottom: 1px solid #e3e3e3; flex: none; }
.menubar button { height: 25px; }

.toolrow { display: flex; height: 40px; border-bottom: 1px solid #b5b5b5; flex: none; }
.toolbar { display: flex; align-items: center; padding-right: 2px; border-top: 1px solid #fff; border-right: 1px solid #b5b5b5; }
.toolbar.last { flex: 1; border-right: 0; }
.grip { width: 11px; height: 30px; background: linear-gradient(#b0b0b0, #b0b0b0) 4px 0 / 2px 100% no-repeat; mask: repeating-linear-gradient(#000 0 2px, transparent 2px 4px); flex: none; }
.tool { width: 37px; height: 37px; display: flex; align-items: center; justify-content: center; flex: none; }
.tool svg { width: 28px; height: 28px; overflow: visible; }
.drop { width: 15px; height: 37px; display: flex; align-items: center; justify-content: center; flex: none; }
.arrow { border: 5px solid transparent; border-top-color: #000; border-bottom-width: 0; pointer-events: none; }
.arrow.grey { border-top-color: #6a6a6a; }
.sep { width: 7px; height: 30px; background: linear-gradient(#ccc, #ccc) center / 1px 100% no-repeat; flex: none; }
.workbench { display: flex; align-items: center; width: 166px; height: 22px; margin-left: 1px; padding: 0 3px 0 5px; border: 1px solid #adadad; background: #e1e1e1; font-size: 12px; }
.workbench svg { width: 16px; height: 16px; margin-right: 2px; flex: none; }
.workbench select { flex: 1; appearance: none; line-height: 20px; }

.workspace { flex: 1; display: flex; min-height: 0; }
.dock { width: 445px; flex: none; display: flex; flex-direction: column; padding: 1px 5px 0 0; }
.dock-title { display: flex; align-items: center; gap: 7px; height: 23px; padding: 0 3px 0 4px; background: #d9d9d9; border: 1px solid #b4b4b4; font-size: 12px; flex: none; }
.dock-title h2 { flex: 1; }
.dock-title svg { width: 10px; height: 10px; }
.tabs { display: flex; align-items: flex-end; height: 25px; padding-top: 1px; font-size: 12px; flex: none; }
.tabs button { height: 22px; padding: 0 12px; border: 1px solid #d9d9d9; border-bottom: 0; border-left: 0; }
.tabs .active { height: 24px; padding: 0 15px; background: #fff; }
.pane { flex: 1; min-height: 0; display: flex; flex-direction: column; gap: 8px; margin-right: 2px; padding: 1px 1px 0 2px; border: 1px solid #dcdcdc; border-width: 1px 1px 0 0; }
.tree { flex: 0 1 358px; border: 1px solid #828790; background: #fff; min-height: 160px; }
.tree h3 { width: 311px; height: 31px; padding-left: 5px; line-height: 32px; border-right: 1px solid #e5e5e5; }
.tree ul { list-style: none; margin: 0; padding: 0; width: 311px; }
.tree li { display: flex; align-items: center; height: 22px; }
.root { padding-left: 3px; }
.doc { padding-left: 6px; gap: 8px; font-weight: bold; }
.doc .node { margin-left: 4px; }
.sheet { margin-left: 50px; padding-left: 3px; gap: 6px; background: #d9d9d9; }
.body { padding-left: 31px; gap: 8px; }
.body .node { margin-left: 4px; }
.twist { width: 12px; height: 12px; flex: none; }
.node { width: 16px; height: 18px; flex: none; }
.props { flex: 1; min-height: 0; margin: 0 3px 0 2px; border: 1px solid #828790; border-bottom: 0; background: #fff; overflow: hidden; }
.props table { width: 100%; border-collapse: collapse; table-layout: fixed; line-height: 20px; }
.indent { width: 25px; }
.name { width: 99px; }
.props th, .props td { height: 25px; padding: 0 3px; text-align: left; font-weight: normal; white-space: nowrap; }
.props thead th { height: 31px; padding: 0 5px; border-right: 1px solid #e0e0e0; }
.props tbody th, .props tbody td + th + td { border-right: 1px solid #d5d5d5; border-bottom: 1px solid #d5d5d5; }
.props tbody tr:nth-child(even) { background: #f5f5f5; }
.props tbody .group { background: #a0a0a0; color: #fff; }
.props .group th { font-weight: bold; }
.view { flex: 1; min-width: 0; }
.view svg { width: 100%; height: 100%; }
.model { shape-rendering: crispEdges; }
```
